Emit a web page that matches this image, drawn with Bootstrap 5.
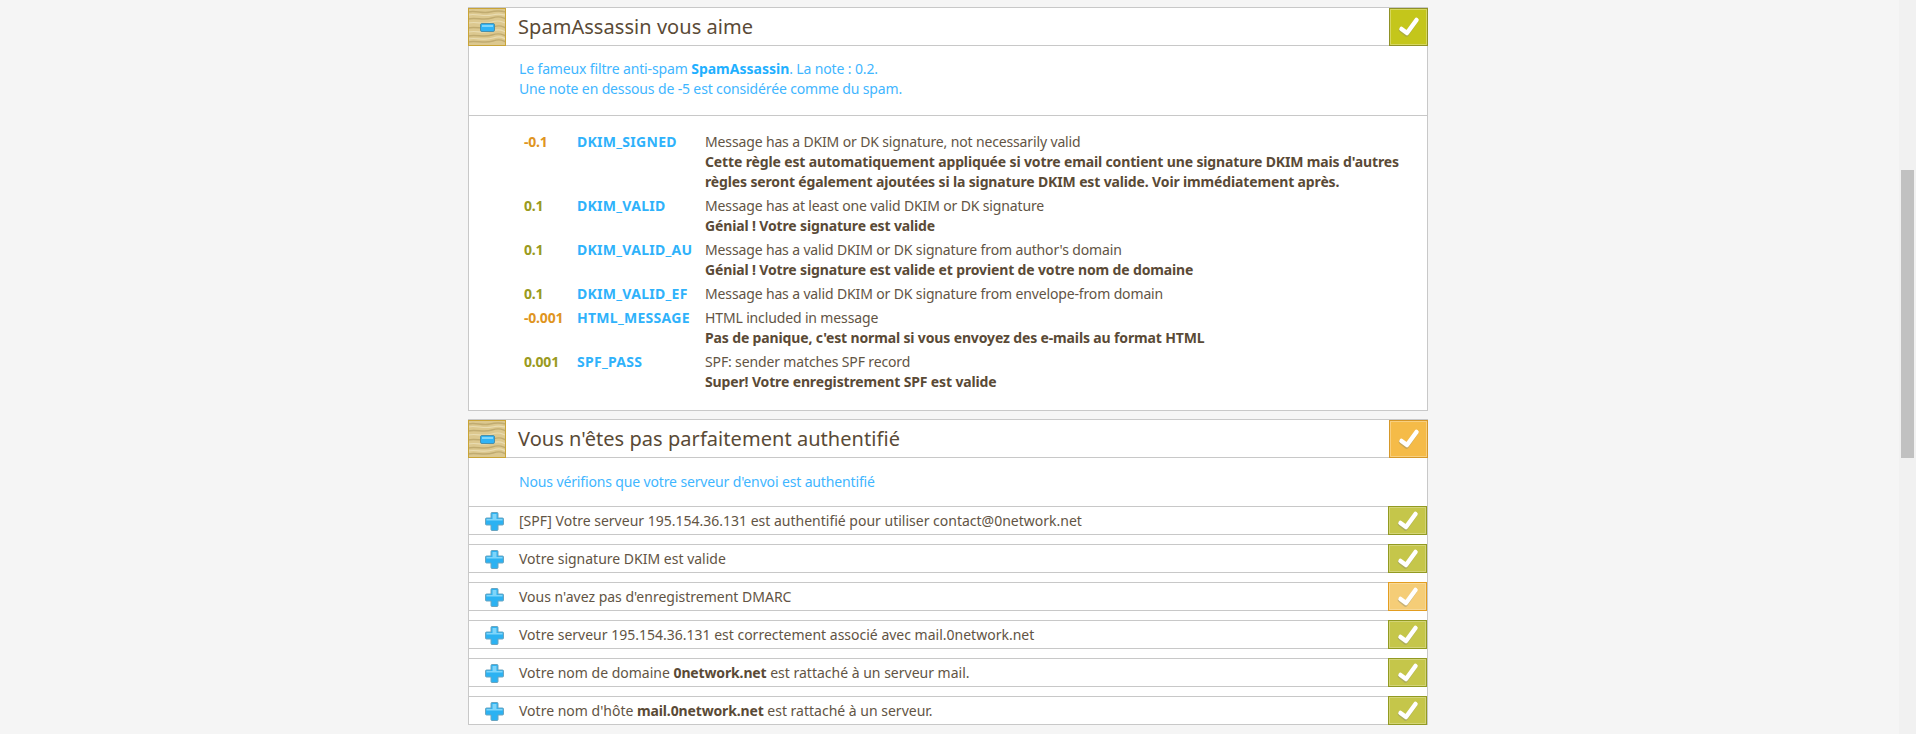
<!DOCTYPE html>
<html lang="fr"><head><meta charset="utf-8"><title>Mail test</title>
<link href="https://cdn.jsdelivr.net/npm/bootstrap@5.3.0/dist/css/bootstrap.min.css" rel="stylesheet">
<style>
html,body{height:734px;overflow:hidden}
body{background:#f5f5f5;color:#625444;font-family:"Noto Sans","Liberation Sans",sans-serif;font-size:14px;line-height:20px;letter-spacing:-.14px}
.scroll-track{width:17px;background:#f1f1f1;padding:170px 2px 0}
.scroll-thumb{height:288px;background:#c1c1c1}
.page-col{width:960px;margin-left:468px;padding-top:7px}
.test-block{background:#fff;border:1px solid #c8c8c8;margin-bottom:8px}
.test-block.cut{border-bottom:0;margin-bottom:0}
.test-head{height:38px;border-bottom:1px solid #c8c8c8}
.tile{width:38px;height:38px;flex:none;margin:-1px 0 -1px -1px;display:block}
.head-title{font-size:20px;padding-left:12px;letter-spacing:.05px;line-height:38px;flex:1;color:#5a4a36}
.check-box{width:39px;height:38px;flex:none;margin:-1px -1px -1px 0;border:1px solid;display:flex;align-items:center;justify-content:center;box-shadow:inset 0 0 0 1px rgba(255,255,255,.3)}
.check-box.green{background:#c4c61b;border-color:#8f9126}
.check-box.amber{background:#f5bb48;border-color:#d5982a}
.intro{color:#3fb6ff;padding:14px 0 14px 50px}
.intro.tall{padding:13px 0 16px 50px}
.intro b{color:#1fb0ff;letter-spacing:0}
.rule-list{border-top:1px solid #c8c8c8;padding:16px 0 18px 55px}
.rule-row{display:flex;margin-bottom:4px}
.rule-row:last-child{margin-bottom:0}
.score{width:53px;font-weight:700;flex:none;letter-spacing:-.2px}
.score.pos{color:#9a9a20}
.score.neg{color:#df951f}
.rule-name{width:128px;flex:none;font-weight:700;color:#2fb2fb;letter-spacing:.28px}
.rule-desc{flex:1;padding-right:24px}
.rule-desc b{color:#5a4a36}
.sub-row{height:29px;border-top:1px solid #c8c8c8;border-bottom:1px solid #c8c8c8;margin-bottom:9px;display:flex;align-items:center}
.sub-row:last-child{margin-bottom:0}
.plus{width:19px;height:19px;margin-left:16px;margin-top:1px;flex:none;display:block}
.sub-text{flex:1;padding-left:15px;letter-spacing:0}
.sub-text b{color:#5a4a36;letter-spacing:-.14px}
.sub-check{width:39px;height:29px;flex:none;margin:-1px 0;border:1px solid;display:flex;align-items:center;justify-content:center;box-shadow:inset 0 0 0 1px rgba(255,255,255,.25)}
.sub-check.green{background:#c5c64a;border-color:#929a22}
.sub-check.amber{background:#f5cd77;border-color:#e39d20}
</style></head><body>
<svg width="0" height="0" class="position-absolute">
<defs>
<symbol id="wood" viewBox="0 0 38 38">
<rect width="38" height="38" fill="#dcc88f"/>
<path d="M0 4C8 2 14 6 22 4S34 3 38 4M0 11C9 9 15 13 24 10S34 10 38 11M0 20C8 18 16 22 25 19S34 19 38 20M0 28C9 26 15 30 24 27S34 27 38 28M0 34C8 32 16 36 25 33S34 33 38 34" stroke="#c0ab70" stroke-width="1.4" fill="none"/>
<path d="M0 7C8 5 15 9 24 7S34 7 38 7M0 15C9 13 15 17 24 14S34 15 38 15M0 24C9 22 15 26 24 23S34 23 38 24M0 31C8 29 16 33 25 30S34 30 38 31" stroke="#e9dcb2" stroke-width="1.2" fill="none"/>
<rect x=".5" y=".5" width="37" height="37" fill="none" stroke="#c9a437"/>
<rect x="12.500" y="15.500" width="14" height="8" rx="1.500" fill="#2fb3f5" stroke="#4c8fa8"/>
<rect x="14" y="17" width="11" height="2" fill="#7fd6fb"/>
</symbol>
<symbol id="tick" viewBox="0 0 24 24">
<path d="M4.500 14L10 18.500L19.500 5" fill="none" stroke="#8d8d70" stroke-opacity=".45" stroke-width="4.500" stroke-linecap="round" stroke-linejoin="round" transform="translate(-.5 1)"/>
<path d="M4.500 14L10 18L19.500 5" fill="none" stroke="#fff" stroke-width="4.500" stroke-linecap="round" stroke-linejoin="round"/>
</symbol>
<symbol id="cross" viewBox="0 0 19 19">
<path d="M7 .5h5a1 1 0 0 1 1 1V6h4.500a1 1 0 0 1 1 1v5a1 1 0 0 1-1 1H13v4.500a1 1 0 0 1-1 1H7a1 1 0 0 1-1-1V13H1.500a1 1 0 0 1-1-1V7a1 1 0 0 1 1-1H6V1.500a1 1 0 0 1 1-1z" fill="#2cb2f2" stroke="#6aa5c0"/>
<path d="M7.500 2h4v5h6v1.500h-16V7h6z" fill="#7fd5fa"/>
</symbol>
</defs></svg>
<div class="d-flex" style="height:734px">
<main class="flex-grow-1 overflow-hidden">
<div class="page-col">
<section class="test-block">
<div class="test-head d-flex align-items-center">
<svg class="tile"><use href="#wood"/></svg>
<div class="head-title">SpamAssassin vous aime</div>
<div class="check-box green"><svg width="24" height="24"><use href="#tick"/></svg></div>
</div>
<div class="intro tall">Le fameux filtre anti-spam <b>SpamAssassin</b>. La note : 0.2.<br>Une note en dessous de -5 est considérée comme du spam.</div>
<div class="rule-list">
<div class="rule-row"><div class="score neg">-0.1</div><div class="rule-name">DKIM_SIGNED</div><div class="rule-desc">Message has a DKIM or DK signature, not necessarily valid<br><b>Cette règle est automatiquement appliquée si votre email contient une signature DKIM mais d'autres règles seront également ajoutées si la signature DKIM est valide. Voir immédiatement après.</b></div></div>
<div class="rule-row"><div class="score pos">0.1</div><div class="rule-name">DKIM_VALID</div><div class="rule-desc">Message has at least one valid DKIM or DK signature<br><b>Génial ! Votre signature est valide</b></div></div>
<div class="rule-row"><div class="score pos">0.1</div><div class="rule-name">DKIM_VALID_AU</div><div class="rule-desc">Message has a valid DKIM or DK signature from author's domain<br><b>Génial ! Votre signature est valide et provient de votre nom de domaine</b></div></div>
<div class="rule-row"><div class="score pos">0.1</div><div class="rule-name">DKIM_VALID_EF</div><div class="rule-desc">Message has a valid DKIM or DK signature from envelope-from domain</div></div>
<div class="rule-row"><div class="score neg">-0.001</div><div class="rule-name">HTML_MESSAGE</div><div class="rule-desc">HTML included in message<br><b>Pas de panique, c'est normal si vous envoyez des e-mails au format HTML</b></div></div>
<div class="rule-row"><div class="score pos">0.001</div><div class="rule-name">SPF_PASS</div><div class="rule-desc">SPF: sender matches SPF record<br><b>Super! Votre enregistrement SPF est valide</b></div></div>
</div>
</section>
<section class="test-block cut">
<div class="test-head d-flex align-items-center">
<svg class="tile"><use href="#wood"/></svg>
<div class="head-title">Vous n'êtes pas parfaitement authentifié</div>
<div class="check-box amber"><svg width="24" height="24"><use href="#tick"/></svg></div>
</div>
<div class="intro">Nous vérifions que votre serveur d'envoi est authentifié</div>
<div class="sub-row"><svg class="plus"><use href="#cross"/></svg><div class="sub-text">[SPF] Votre serveur 195.154.36.131 est authentifié pour utiliser contact@0network.net</div><div class="sub-check green"><svg width="24" height="24"><use href="#tick"/></svg></div></div>
<div class="sub-row"><svg class="plus"><use href="#cross"/></svg><div class="sub-text">Votre signature DKIM est valide</div><div class="sub-check green"><svg width="24" height="24"><use href="#tick"/></svg></div></div>
<div class="sub-row"><svg class="plus"><use href="#cross"/></svg><div class="sub-text">Vous n'avez pas d'enregistrement DMARC</div><div class="sub-check amber"><svg width="24" height="24"><use href="#tick"/></svg></div></div>
<div class="sub-row"><svg class="plus"><use href="#cross"/></svg><div class="sub-text">Votre serveur 195.154.36.131 est correctement associé avec mail.0network.net</div><div class="sub-check green"><svg width="24" height="24"><use href="#tick"/></svg></div></div>
<div class="sub-row"><svg class="plus"><use href="#cross"/></svg><div class="sub-text">Votre nom de domaine <b>0network.net</b> est rattaché à un serveur mail.</div><div class="sub-check green"><svg width="24" height="24"><use href="#tick"/></svg></div></div>
<div class="sub-row"><svg class="plus"><use href="#cross"/></svg><div class="sub-text">Votre nom d'hôte <b>mail.0network.net</b> est rattaché à un serveur.</div><div class="sub-check green"><svg width="24" height="24"><use href="#tick"/></svg></div></div>
</section>
</div>
</main>
<aside class="scroll-track"><div class="scroll-thumb"></div></aside>
</div>
<script src="https://cdn.jsdelivr.net/npm/bootstrap@5.3.0/dist/js/bootstrap.bundle.min.js"></script>
</body></html>
